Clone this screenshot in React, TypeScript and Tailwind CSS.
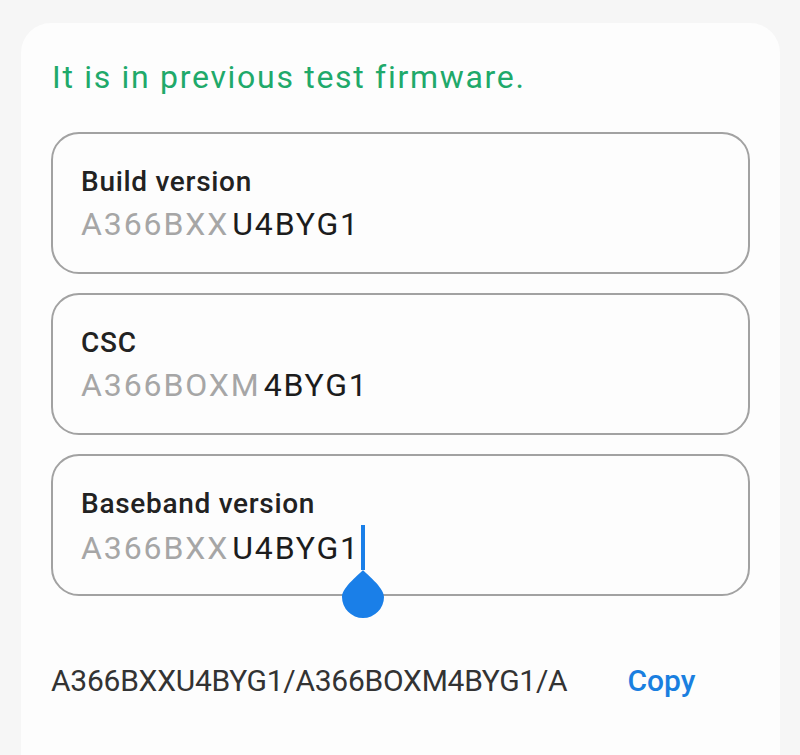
import React from 'react';

const fields = [
  { label: 'Build version', dim: 'A366BXX', main: 'U4BYG1', cursor: false },
  { label: 'CSC', dim: 'A366BOXM', main: '4BYG1', cursor: false },
  { label: 'Baseband version', dim: 'A366BXX', main: 'U4BYG1', cursor: true },
];

function Field({ label, dim, main, cursor }: { label: string; dim: string; main: string; cursor: boolean }) {
  return (
    <div className="relative h-[142px] rounded-[28px] border-2 border-[#a2a2a2] pl-[28px] pt-[31px]">
      <div className="text-[28px] leading-[34px] font-medium tracking-[0.7px] text-[#222]">{label}</div>
      <div className="mt-[4px] flex items-center text-[32px] leading-[42px] tracking-[1.9px]">
        <span className="text-[#a6a6a6]">{dim}</span>
        <span className="ml-[3px] text-[#1c1c1c]">{main}</span>
        {cursor && (
          <span className="relative ml-[1px] inline-block h-[45px] w-[4px] bg-[#1a7fe8]">
            <svg className="absolute left-[-20px] top-[44px]" width="44" height="50" viewBox="0 0 44 50">
              <path d="M22 1 C24 4 43 18 43 28 A21 21 0 1 1 1 28 C1 18 20 4 22 1 Z" fill="#1a7fe8" />
            </svg>
          </span>
        )}
      </div>
    </div>
  );
}

export default function App() {
  return (
    <div className="min-h-[755px] bg-[#f6f6f6] pl-[21px] pr-[20px] pt-[23px] font-['Roboto',sans-serif]">
      <div className="min-h-[732px] rounded-t-[30px] bg-[#fdfdfd] px-[30px] pt-[34px]">
        <div className="pl-[1px] text-[32px] leading-[40px] tracking-[1.7px] text-[#20a96a]">
          It is in previous test firmware.
        </div>
        <div className="mt-[35px] flex flex-col gap-[19px]">
          {fields.map((f) => (
            <Field key={f.label} {...f} />
          ))}
        </div>
        <div className="mt-[67px] flex items-center">
          <span className="text-[30px] leading-[36px] tracking-[-0.25px] text-[#333]">
            A366BXXU4BYG1/A366BOXM4BYG1/A
          </span>
          <span className="ml-[60px] text-[30px] leading-[36px] font-medium text-[#1a7fe0]">Copy</span>
        </div>
      </div>
    </div>
  );
}
